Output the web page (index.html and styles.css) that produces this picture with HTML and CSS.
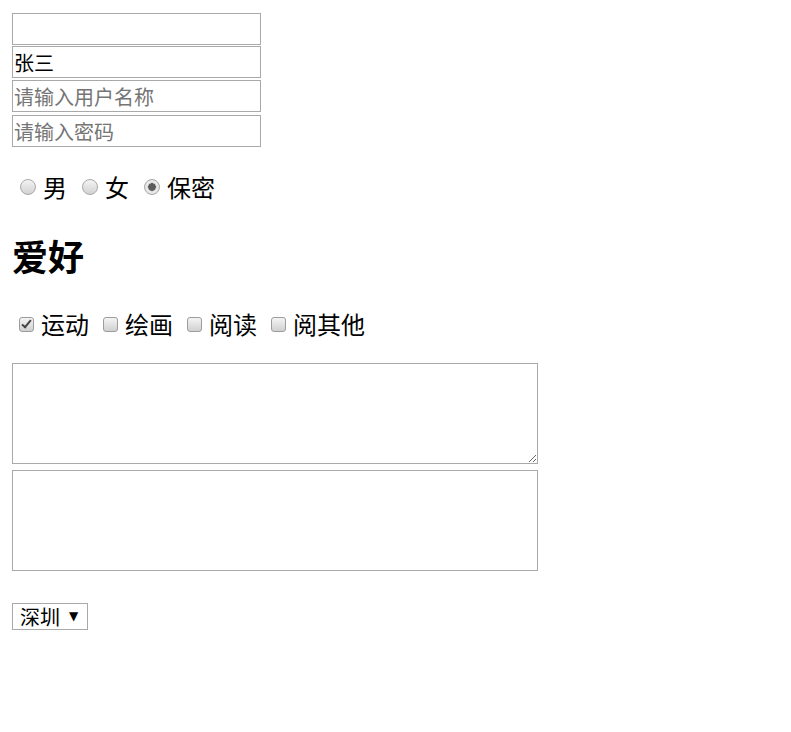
FILE: index.html
```html
<!DOCTYPE html>
<html lang="zh-CN">
<head>
<meta charset="utf-8">
<title>表单</title>
<link rel="stylesheet" href="styles.css">
</head>
<body>
<form class="page">
  <input class="field f1" type="text">
  <input class="field f2" type="text" value="张三">
  <input class="field f3" type="text" placeholder="请输入用户名称">
  <input class="field f4" type="password" placeholder="请输入密码">

  <div class="radios">
    <label class="opt"><input class="radio" type="radio" name="sex">男</label>
    <label class="opt"><input class="radio" type="radio" name="sex">女</label>
    <label class="opt"><input class="radio" type="radio" name="sex" checked>保密</label>
  </div>

  <h1 class="title">爱好</h1>

  <div class="checks">
    <label class="opt"><input class="check" type="checkbox" checked>运动</label>
    <label class="opt"><input class="check" type="checkbox">绘画</label>
    <label class="opt"><input class="check" type="checkbox">阅读</label>
    <label class="opt"><input class="check" type="checkbox">阅其他</label>
  </div>

  <textarea class="area a1"></textarea>
  <textarea class="area a2"></textarea>

  <div class="select-wrap">
    <select class="city">
      <option>深圳</option>
      <option>北京</option>
      <option>上海</option>
    </select>
    <span class="arrow">▼</span>
  </div>
</form>
</body>
</html>
```

FILE: styles.css
```css
html, body {
  margin: 0;
  padding: 0;
  background: #fff;
}

body {
  font-family: "Noto Sans CJK SC", "Liberation Sans", sans-serif;
  color: #000;
}

.page {
  display: flex;
  flex-direction: column;
  align-items: flex-start;
  padding: 13px 0 0 12px;
}

.field {
  box-sizing: border-box;
  width: 249px;
  height: 32px;
  margin: 0;
  padding: 0 1px;
  border: 1px solid #a9a9a9;
  font-family: "Noto Sans CJK SC", sans-serif;
  font-size: 20px;
  color: #000;
  background: #fff;
  outline: none;
}

.field::placeholder {
  color: #757575;
}

.f2 { margin-top: 1px; }
.f3 { margin-top: 2px; }
.f4 { margin-top: 3px; }

.radios,
.checks {
  display: flex;
  align-items: center;
  font-size: 24px;
}

.radios {
  height: 50px;
  margin-top: 15px;
  padding-left: 8px;
  gap: 15px;
}

.checks {
  height: 40px;
  margin-top: 31px;
  padding-left: 7px;
  gap: 14px;
}

.opt {
  display: flex;
  align-items: center;
  line-height: 1;
}

.radio {
  appearance: none;
  -webkit-appearance: none;
  box-sizing: border-box;
  width: 16px;
  height: 16px;
  margin: 0 7px 0 0;
  border: 1px solid #a8a8a8;
  border-radius: 50%;
  background: linear-gradient(#f3f3f3, #d2d2d2);
}

.radio:checked {
  background:
    radial-gradient(circle at center, #5c5c5c 0 3.5px, #c8c8c8 4px, #ececec 5px, #dcdcdc 8px);
}

.check {
  appearance: none;
  -webkit-appearance: none;
  position: relative;
  box-sizing: border-box;
  width: 15px;
  height: 15px;
  margin: 0 7px 0 0;
  border: 1px solid #9c9c9c;
  border-radius: 3px;
  background: linear-gradient(#f4f4f4, #d0d0d0);
}

.check:checked::after {
  content: "";
  position: absolute;
  left: 4px;
  top: 0px;
  width: 3px;
  height: 8px;
  border: solid #444;
  border-width: 0 2.5px 2.5px 0;
  transform: rotate(40deg);
}

.title {
  margin: 25px 0 0 0;
  height: 36px;
  font-size: 36px;
  line-height: 36px;
  font-weight: 700;
}

.area {
  box-sizing: border-box;
  width: 526px;
  height: 101px;
  margin: 0;
  padding: 2px;
  border: 1px solid #a9a9a9;
  font-family: "Noto Sans CJK SC", sans-serif;
  font-size: 16px;
  background: #fff;
  outline: none;
}

.a1 {
  margin-top: 19px;
  resize: both;
}

.a2 {
  margin-top: 6px;
  resize: none;
}

.select-wrap {
  position: relative;
  margin-top: 32px;
}

.city {
  appearance: none;
  -webkit-appearance: none;
  box-sizing: border-box;
  width: 76px;
  height: 27px;
  margin: 0;
  padding: 0 0 0 7px;
  border: 1px solid #a9a9a9;
  border-radius: 0;
  background: #fff;
  font-family: "Noto Sans CJK SC", sans-serif;
  font-size: 20px;
  line-height: 25px;
  color: #000;
  outline: none;
}

.arrow {
  position: absolute;
  left: 57px;
  top: 5px;
  font-family: "DejaVu Sans", sans-serif;
  font-size: 12px;
  line-height: 16px;
  color: #000;
  pointer-events: none;
}
```
